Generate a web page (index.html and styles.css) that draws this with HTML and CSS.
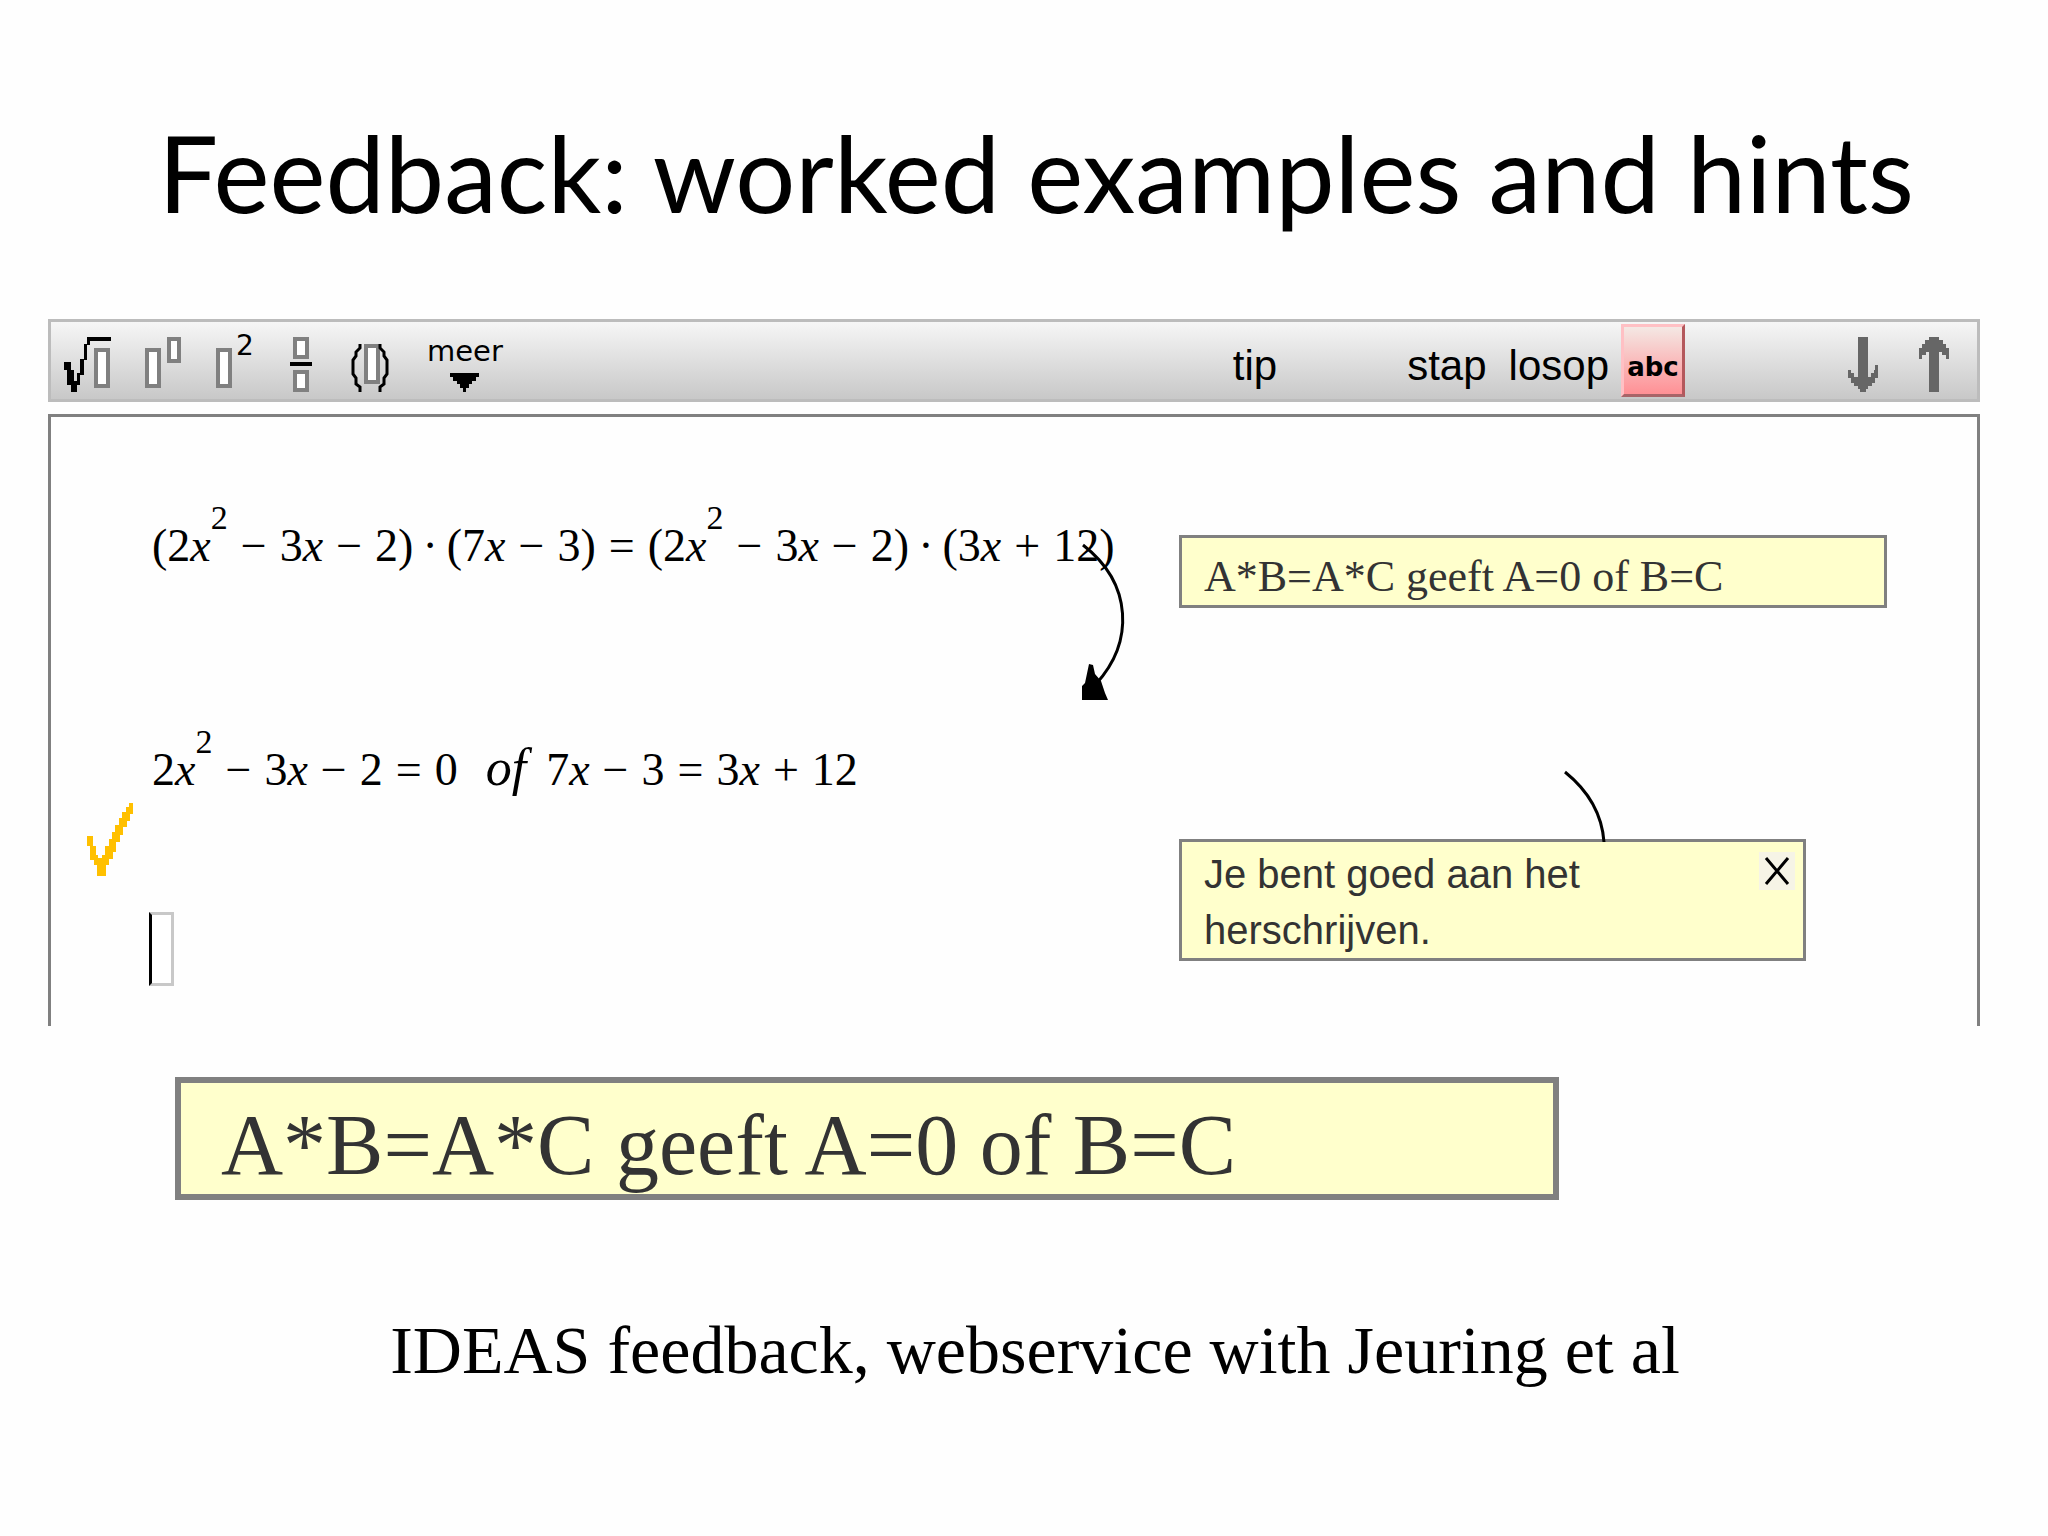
FILE: index.html
```html
<!DOCTYPE html>
<html lang="en">
<head>
    <meta charset="UTF-8">
    <meta name="viewport" content="width=device-width, initial-scale=1.0">
    <title>Feedback: worked examples and hints</title>
    <link rel="stylesheet" href="styles.css">
</head>
<body>
    <main>
        <h1>Feedback: worked examples and hints</h1>

        <section class="editor">
            <div class="toolbar">
                <button type="button" aria-label="root">
                    <svg width="47" height="77" viewBox="0 0 47 77">
                        <path class="ink" d="M0 40h7v8h3v11h3v-8h3V37h4V22h3v-7h25v4H26v4h-3v15h-3v15h-4v10h-3v7H7v-7H3V48H0z"/>
                        <rect class="slot" x="32" y="28" width="12" height="36"/>
                    </svg>
                </button>
                <button type="button" aria-label="power">
                    <svg width="36" height="77" viewBox="0 0 36 77">
                        <rect class="slot" x="2" y="28" width="12" height="36"/>
                        <rect class="slot" x="24" y="17" width="10" height="22"/>
                    </svg>
                </button>
                <button type="button" aria-label="square">
                    <svg width="40" height="77" viewBox="0 0 40 77">
                        <rect class="slot" x="3" y="28" width="12" height="36"/>
                        <text x="21" y="33">2</text>
                    </svg>
                </button>
                <button type="button" aria-label="fraction">
                    <svg width="26" height="77" viewBox="0 0 26 77">
                        <rect class="slot" x="6" y="17" width="12" height="18"/>
                        <rect class="ink" x="1" y="40" width="22" height="4"/>
                        <rect class="slot" x="6" y="50" width="12" height="18"/>
                    </svg>
                </button>
                <button type="button" aria-label="brackets">
                    <svg width="44" height="77" viewBox="0 0 44 77">
                        <rect class="slot" x="17" y="24" width="12" height="36"/>
                        <path class="line" d="M11 22v4l-4 4v4l-3 4v14l3 4v6l4 3v5M31 22v4l4 4v4l3 4v14l-3 4v6l-4 3v5"/>
                    </svg>
                </button>
                <button type="button" class="more">meer
                    <svg width="29" height="19" viewBox="0 0 29 19">
                        <path class="ink" d="M0 0h29v4h-3v4h-4v3h-3v4h-3v4h-3v-4h-3v-4H7V8H3V4H0z"/>
                    </svg>
                </button>

                <button type="button" class="tip">tip</button>
                <button type="button" class="word">stap</button>
                <button type="button" class="word">losop</button>
                <button type="button" class="abc">abc</button>
                <button type="button" class="arrow" aria-label="down">
                    <svg width="30" height="77" viewBox="0 0 30 77">
                        <path d="M10 15h10v40h3v-4h3v-3h1v-5h3v13h-3v5h-3v3h-4v3h-2v3h-6v-3h-2v-3H6v-3H3v-5H0V48h3v3h3v4h4z"/>
                    </svg>
                </button>
                <button type="button" class="arrow" aria-label="up">
                    <svg width="30" height="77" viewBox="0 0 30 77">
                        <path d="M10 70h10V30h3v3h4v4h3V26h-3v-4h-3v-4h-4v-3H10v3H6v4H3v4H0v11h3v-4h4v-3h3z"/>
                    </svg>
                </button>
            </div>

            <div class="sheet">
                <div class="steps">
                    <p class="formula">(2<i>x</i><sup>2</sup><b>−</b>3<i>x</i><b>−</b>2)<b class="dot">·</b>(7<i>x</i><b>−</b>3)<b>=</b>(2<i>x</i><sup>2</sup><b>−</b>3<i>x</i><b>−</b>2)<b class="dot">·</b>(3<i>x</i><b>+</b>12)
                        <svg class="step-arrow" width="52" height="160" viewBox="0 0 52 160">
                            <path class="curve" d="M5 3C55 42 56 100 18 142"/>
                            <path class="ink" d="M11 122l4 1 2 9 6 7 4 12 3 7H4v-14l3-3z"/>
                        </svg>
                    </p>
                    <p class="formula">2<i>x</i><sup>2</sup><b>−</b>3<i>x</i><b>−</b>2<b>=</b>0<em>of</em>7<i>x</i><b>−</b>3<b>=</b>3<i>x</i><b>+</b>12</p>
                    <svg class="check" width="49" height="73" viewBox="0 0 49 73">
                        <path d="M0 33h6v10h3v9h2v3h4v-3h3V43h4v-7h3v-7h3v-7h4v-7h3V9h4V4h3V0h4v11h-3v7h-3v6h-4v8h-3v7h-4v10h-3v7h-4v6h-3v11h-9V62H7v-5H3V43H0z"/>
                    </svg>
                    <input type="text" class="entry" aria-label="next step">
                </div>

                <div class="notes">
                    <p class="note rule">A*B=A*C geeft A=0 of B=C</p>
                    <div class="note message">
                        <svg class="note-curve" width="48" height="72" viewBox="0 0 48 72">
                            <path class="curve" d="M4 2Q40 31 43 72"/>
                        </svg>
                        <p>Je bent goed aan het herschrijven.</p>
                        <button type="button" class="close" aria-label="close">
                            <svg width="26" height="28" viewBox="0 0 26 28">
                                <path class="line" d="M2 1L24 27M24 1L2 27"/>
                            </svg>
                        </button>
                    </div>
                </div>
            </div>
        </section>

        <p class="note zoomed">A*B=A*C geeft A=0 of B=C</p>

        <p class="credit">IDEAS feedback, webservice with Jeuring et al</p>
    </main>
</body>
</html>
```
FILE: styles.css
```css
/* Global Styles */
* {
    box-sizing: border-box;
}

body {
    margin: 0;
    background-color: #fefefe;
    color: #000;
    font-family: "Liberation Serif", serif;
}

main {
    padding: 102px 68px 0 48px;
}

h1, p {
    margin: 0;
}

h1 {
    padding-left: 44px;
    font-family: Lato, sans-serif;
    font-size: 106px;
    font-weight: normal;
    line-height: 140px;
    text-align: center;
}

button {
    padding: 0;
    border: none;
    background: none;
    color: inherit;
    font-family: inherit;
}

svg {
    display: block;
}

/* Shared drawing styles */
.ink {
    fill: #000;
}

.slot {
    fill: #fff;
    stroke: #808080;
    stroke-width: 4;
}

.line,
.curve {
    fill: none;
    stroke: #000;
    stroke-width: 3;
}

/* Toolbar */
.editor {
    margin-top: 77px;
}

.toolbar {
    display: flex;
    align-items: center;
    gap: 34px;
    height: 83px;
    padding: 0 28px 0 13px;
    border: 3px solid #bcbcbc;
    background: linear-gradient(#f6f6f6, #c8c8c8);
    font-family: "Liberation Sans", sans-serif;
}

.toolbar text {
    font-family: "DejaVu Sans", sans-serif;
    font-size: 28px;
}

.more {
    display: flex;
    flex-direction: column;
    align-items: center;
    gap: 6px;
    padding-top: 6px;
    font-family: "DejaVu Sans", sans-serif;
    font-size: 29px;
    line-height: 32px;
}

.tip,
.word {
    padding-top: 10px;
    font-size: 42px;
}

.tip {
    margin-left: auto;
    margin-right: 96px;
}

.word {
    margin-right: -12px;
}

.abc {
    width: 64px;
    height: 73px;
    padding-top: 12px;
    margin-left: -10px;
    margin-right: 122px;
    border: 3px solid #ffc0c4;
    border-right-color: #b4585c;
    border-bottom-color: #a86468;
    background: linear-gradient(#f4e8e4, #ff9095);
    font-family: "DejaVu Sans", sans-serif;
    font-size: 26px;
    font-weight: bold;
}

.arrow {
    margin-left: 7px;
    fill: #666;
}

/* Work sheet */
.sheet {
    display: grid;
    grid-template-columns: 1128fr 798fr;
    margin-top: 12px;
    padding-bottom: 40px;
    border: 3px solid #808080;
    border-bottom: none;
}

.steps {
    display: flex;
    flex-direction: column;
    align-items: flex-start;
    padding: 99px 0 0 36px;
}

.formula {
    position: relative;
    margin-left: 65px;
    font-size: 46px;
    line-height: 60px;
    white-space: nowrap;
}

.formula + .formula {
    margin-top: 164px;
}

.formula b {
    margin: 0 13px;
    font-weight: normal;
}

.formula .dot {
    margin: 0 9px;
}

.formula em {
    margin: 0 20px 0 28px;
    font-size: 52px;
    line-height: 0;
}

.formula sup {
    font-size: 34px;
    line-height: 0;
    vertical-align: 32px;
}

.step-arrow {
    position: absolute;
    top: 26px;
    right: -16px;
}

.check {
    margin-top: 3px;
    fill: #ffc000;
}

.entry {
    width: 25px;
    height: 74px;
    margin: 36px 0 0 62px;
    padding: 0;
    border: 3px solid #c8c8c8;
    border-left-color: #000;
    background-color: #fff;
    font-size: 46px;
}

/* Yellow notes */
.notes {
    display: flex;
    flex-direction: column;
    gap: 231px;
    padding-top: 118px;
}

.note {
    border: 3px solid #808080;
    background-color: #ffffcc;
    color: #333;
}

.rule {
    margin-right: 90px;
    padding: 10px 22px 0;
    font-size: 44px;
    line-height: 57px;
}

.message {
    display: flex;
    position: relative;
    justify-content: space-between;
    align-items: flex-start;
    margin-right: 171px;
    padding: 4px 8px 0 22px;
    font-family: "Liberation Sans", sans-serif;
    font-size: 40px;
    line-height: 56px;
}

.message p {
    max-width: 400px;
}

.note-curve {
    position: absolute;
    bottom: 100%;
    left: 61%;
}

.close {
    margin-top: 6px;
    padding: 5px;
    background-color: #f6f4e6;
}

.zoomed {
    margin: 51px 421px 0 127px;
    padding: 14px 40px 0;
    border-width: 6px;
    font-size: 86px;
    line-height: 97px;
}

.credit {
    margin-top: 110px;
    padding-left: 42px;
    font-size: 68px;
    line-height: 80px;
    text-align: center;
}

@media (max-width: 1200px) {
    .sheet {
        grid-template-columns: 1fr;
    }
}
```
